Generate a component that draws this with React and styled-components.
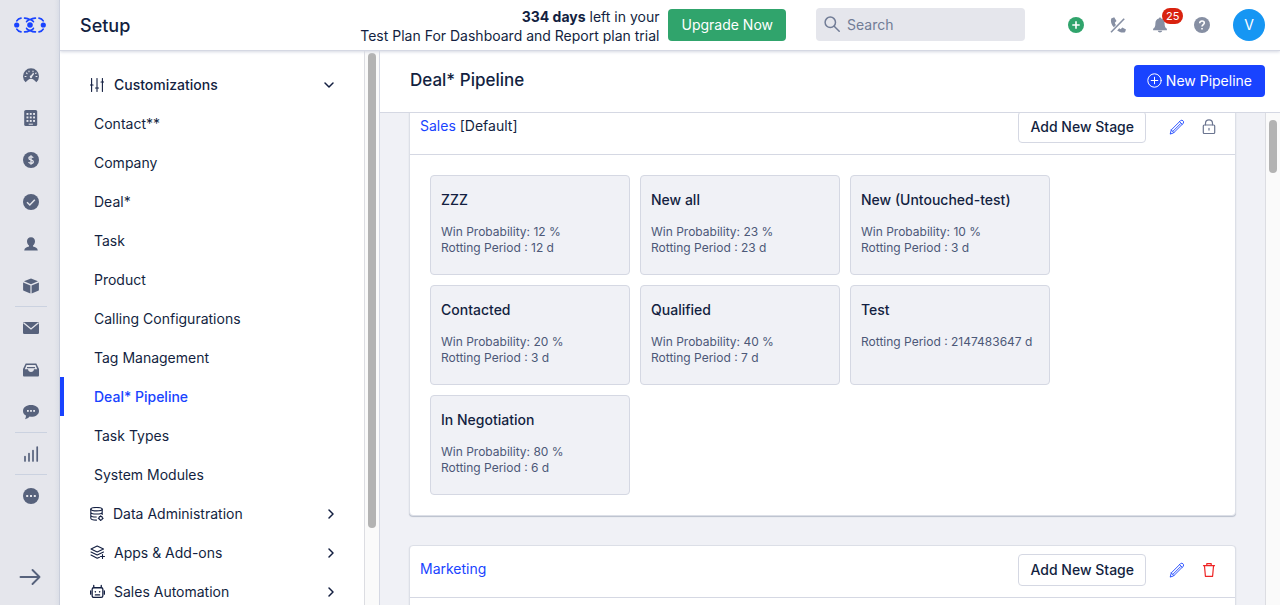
import React, { useLayoutEffect, useRef } from 'react';
import styled, { createGlobalStyle, css } from 'styled-components';

const GlobalStyle = createGlobalStyle`
  * { box-sizing: border-box; }
  body {
    margin: 0;
    font-family: Inter, "Liberation Sans", sans-serif;
    font-size: 14px;
    line-height: 20px;
    color: #131f41;
    background: #fff;
  }
  button, input { font: inherit; color: inherit; }
  a { color: inherit; text-decoration: none; }
  h1, h2, h3, p, ul { margin: 0; padding: 0; }
  ul { list-style: none; }
  svg { display: block; flex: none; }
`;

const Shell = styled.div`
  display: flex;
  height: 100vh;
  overflow: hidden;
`;

const Rail = styled.nav`
  display: flex;
  flex-direction: column;
  align-items: center;
  flex: none;
  width: 60px;
  padding: 12px 0;
  background: linear-gradient(to right, #e5e6ec 54px, #dcdfe7);
  border-right: 1px solid #c9cedb;
  color: #57627c;
`;

const Brand = styled.a`
  display: flex;
  align-items: center;
  height: 26px;
  margin-bottom: 17px;
`;

const RailLink = styled.a`
  display: flex;
  align-items: center;
  justify-content: center;
  flex: none;
  width: 32px;
  height: 42px;
  margin-left: 2px;
  border-bottom: 1px solid ${(p) => (p.$divided ? '#cbd2e0' : 'transparent')};
`;

const RailToggle = styled.button`
  display: flex;
  align-items: center;
  justify-content: center;
  width: 32px;
  height: 32px;
  margin-top: auto;
  padding: 0;
  border: 0;
  background: none;
`;

const Workspace = styled.div`
  display: flex;
  flex: 1;
  flex-direction: column;
  min-width: 0;
`;

const TopBar = styled.header`
  display: flex;
  align-items: center;
  flex: none;
  height: 51px;
  padding: 0 15px 0 20px;
  border-bottom: 1px solid #d5d8e3;
  box-shadow: 0 1px 3px #d5d8e3;
  z-index: 1;
`;

const AppTitle = styled.h1`
  flex: 1;
  padding-top: 2px;
  font-size: 18px;
  font-weight: 500;
  line-height: 24px;
`;

const TrialNote = styled.p`
  margin-right: 9px;
  padding-top: 1px;
  line-height: 19px;
  text-align: right;
`;

const SolidButton = styled.button`
  display: flex;
  align-items: center;
  gap: 4px;
  height: 32px;
  padding: 0 13px;
  border: 0;
  border-radius: 4px;
  background: ${(p) => (p.$tone === 'green' ? '#30a46c' : '#1943ff')};
  color: #fff;
  white-space: nowrap;
`;

const SearchBox = styled.label`
  display: flex;
  align-items: center;
  gap: 7px;
  width: 209px;
  height: 33px;
  margin: 0 35px 2px 30px;
  padding: 0 8px;
  border-radius: 4px;
  background: #e5e6ec;
  color: #717c96;
  input {
    flex: 1;
    min-width: 0;
    height: 24px;
    padding: 0;
    border: 0;
    outline: 0;
    background: none;
  }
  input::placeholder { color: #717c96; opacity: 1; }
`;

const TopActions = styled.div`
  display: flex;
  align-items: center;
  gap: 10px;
  color: #868fa3;
`;

const TopAction = styled.button`
  position: relative;
  display: flex;
  align-items: center;
  justify-content: center;
  width: 32px;
  height: 32px;
  padding: 0;
  border: 0;
  background: none;
`;

const Badge = styled.span`
  position: absolute;
  left: 18px;
  top: -1px;
  padding: 0 4px;
  border-radius: 8px;
  background: #d9220f;
  color: #fff;
  font-size: 11px;
  line-height: 16px;
`;

const Avatar = styled.button`
  width: 32px;
  height: 32px;
  margin-left: 5px;
  padding: 0;
  border: 0;
  border-radius: 50%;
  background: #1696f3;
  color: #fff;
`;

const Columns = styled.div`
  display: flex;
  flex: 1;
  min-height: 0;
`;

const SideMenu = styled.nav`
  display: flex;
  flex: none;
  width: 320px;
  border-right: 1px solid #d5d8e3;
`;

const MenuList = styled.ul`
  flex: 1;
  padding-top: 14px;
  overflow: hidden;
`;

const rowStyle = css`
  display: flex;
  align-items: center;
  width: 100%;
  height: 39px;
`;

const GroupButton = styled.button`
  ${rowStyle}
  gap: ${(p) => (p.$open ? 10 : 9)}px;
  padding: 0 28px 0 30px;
  border: 0;
  background: none;
  text-align: left;
  font-weight: ${(p) => (p.$open ? 500 : 400)};
  span { flex: 1; }
`;

const MenuLink = styled.a`
  ${rowStyle}
  padding-left: 30px;
  border-left: 4px solid ${(p) => (p.$active ? '#1943ff' : 'transparent')};
  color: ${(p) => (p.$active ? '#1943ff' : 'inherit')};
  font-weight: ${(p) => (p.$active ? 500 : 400)};
`;

const Track = styled.div`
  flex: none;
  width: 15px;
  padding: ${(p) => p.$inset}px 3px 0;
  border-left: 1px solid #dcdde2;
  background: #fafafa;
`;

const Thumb = styled.div`
  width: 8px;
  height: ${(p) => p.$share}%;
  border-radius: 4px;
  background: #b3b3b3;
`;

const Main = styled.main`
  display: flex;
  flex: 1;
  flex-direction: column;
  min-width: 0;
  background: #f0f1f6;
`;

const PageHead = styled.div`
  display: flex;
  align-items: center;
  justify-content: space-between;
  flex: none;
  height: 62px;
  padding: 0 15px 2px 30px;
  border-bottom: 1px solid #d5d8e3;
  background: #fff;
  h2 {
    padding-bottom: 2px;
    font-size: 17px;
    font-weight: 500;
    line-height: 24px;
  }
`;

const ScrollArea = styled.div`
  display: flex;
  flex: 1;
  min-height: 0;
`;

const PipelineList = styled.div`
  flex: 1;
  min-width: 0;
  padding: 20px 29px;
  overflow: hidden;
`;

const Pipeline = styled.section`
  margin-bottom: 29px;
  border: 1px solid #dcdfe7;
  border-radius: 4px;
  background: #fff;
  box-shadow: 0 1px 1px #b9bfcc;
`;

const PipelineHead = styled.div`
  display: flex;
  align-items: center;
  height: 52px;
  padding: 0 10px;
  border-bottom: 1px solid #d5d8e3;
  p {
    flex: 1;
    padding-bottom: 5px;
  }
  a { color: #1943ff; }
`;

const OutlineButton = styled.button`
  height: 32px;
  margin-right: 15px;
  margin-bottom: 3px;
  padding: 0 11px;
  border: 1px solid #d5d8e3;
  border-radius: 4px;
  background: #fff;
  font-weight: 500;
`;

const IconButton = styled.button`
  display: flex;
  align-items: center;
  justify-content: center;
  width: 32px;
  height: 32px;
  padding: 0 0 3px;
  border: 0;
  background: none;
  color: ${(p) => p.$color};
`;

const StageGrid = styled.ul`
  display: flex;
  flex-wrap: wrap;
  gap: 10px;
  padding: 20px;
`;

const Stage = styled.li`
  width: 200px;
  height: 100px;
  padding: 14px 10px;
  border: 1px solid #d5d8e3;
  border-radius: 4px;
  background: #f0f1f6;
  h3 {
    margin-bottom: 14px;
    font-size: 14px;
    font-weight: 500;
    line-height: 20px;
  }
  p {
    color: #4c5878;
    font-size: 12px;
    line-height: 16px;
    white-space: nowrap;
  }
`;

const Line = ({ size = 16, w = 1.2, box = 16, children }) => (
  <svg width={size} height={size} viewBox={`0 0 ${box} ${box}`} fill="none" stroke="currentColor"
    strokeWidth={w} strokeLinecap="round" strokeLinejoin="round" aria-hidden="true">{children}</svg>
);
const Solid = ({ size = 16, children }) => (
  <svg width={size} height={size} viewBox="0 0 16 16" fill="currentColor" aria-hidden="true">{children}</svg>
);

const BG = '#e5e6ec';

const Logo = () => (
  <svg width="32" height="16" viewBox="0 0 32 16" fill="none" stroke="#1943ff" strokeWidth="1.700" strokeLinecap="round" aria-hidden="true">
    <path d="M2.800 3.800Q4.200 1.300 7 1.100M2.800 12.200Q4.200 14.700 7 14.900M29.200 3.800Q27.800 1.300 25 1.100M29.200 12.200Q27.800 14.700 25 14.900" />
    <path d="M10.600 1.100Q13.400 1 16 2.800Q18.600 1 21.400 1.100M10.600 14.900Q13.400 15 16 13.200Q18.600 15 21.400 14.900" />
    <path d="M12.600 4.700Q13.200 3.600 14.500 2.900M12.600 11.300Q13.200 12.400 14.500 13.100M19.400 4.700Q18.800 3.600 17.500 2.900M19.400 11.300Q18.800 12.400 17.500 13.100" />
    <g fill="#1943ff" stroke="none"><circle cx="2.700" cy="8" r="2.600" /><circle cx="16" cy="8" r="2.800" /><circle cx="29.300" cy="8" r="2.600" /></g>
  </svg>
);

const railIcons = [
  ['Dashboard', <Solid key="i"><path d="M2.600 14.200A8 8 0 1 1 13.400 14.200L11 12.100a4.500 4.500 0 0 0-6 0z" /><g stroke={BG} strokeWidth="1.100" strokeLinecap="round"><path d="M2 8.500h1M3.500 5l.6.6M6 3v.8M10 3v.8M13.200 5l-.6.5M14 8.500h-1" /><path d="M7.800 9l2.500-3.200" strokeWidth="1.500" /></g><circle cx="8" cy="8.800" r="1.200" fill={BG} /></Solid>],
  ['Companies', <Solid key="i"><rect x="1.200" y="0" width="13" height="16" rx="1.600" /><g fill={BG}>{[3, 6.500, 10].map((y) => [3.500, 6.800, 10.100].map((x) => <rect key={`${x}-${y}`} x={x} y={y} width="1.900" height="1.900" />))}<rect x="5.700" y="13.700" width="4.200" height="1" /></g></Solid>],
  ['Deals', <Solid key="i"><circle cx="8" cy="8" r="8" /><path d="M10.200 5.800C9.800 4.900 9 4.600 8 4.600c-1.200 0-2.100.6-2.100 1.600 0 2.300 4.400 1.100 4.400 3.500 0 1.100-1 1.700-2.300 1.700-1.200 0-2-.5-2.400-1.400M8 3.200v9.600" fill="none" stroke={BG} strokeWidth="1.300" /></Solid>],
  ['Tasks', <Solid key="i"><circle cx="8" cy="8" r="8" /><path d="M4 8.300l2.800 2.700 5-5.300" fill="none" stroke={BG} strokeWidth="1.500" /></Solid>],
  ['Contacts', <Solid key="i"><path d="M8 1.200c-2.700 0-4 1.700-4 4 0 2 .8 3.300 2 4.200v1.200c-2.300.6-4.500 1.400-4.800 4h13.600c-.3-2.600-2.500-3.400-4.800-4V9.400c1.200-.9 2-2.200 2-4.200 0-2.300-1.300-4-4-4z" /></Solid>],
  ['Products', <Solid key="i"><path d="M8 .5l7 2.800L8 6.200.9 3.300z" /><path d="M.1 4.400l7.300 3v8.200L.8 12.700a1 1 0 0 1-.7-1zM15.900 4.400l-7.300 3v8.200l6.600-2.900a1 1 0 0 0 .7-1z" /></Solid>, true],
  ['Mail', <Solid key="i"><rect x="0" y="2" width="16" height="12" rx="1.200" /><path d="M.5 2.800L8 9l7.500-6.200" fill="none" stroke={BG} strokeWidth="1.300" /></Solid>],
  ['Inbox', <Solid key="i"><path fillRule="evenodd" d="M2.700 1.500h10.600L16 7v6.300c0 .8-.5 1.200-1.200 1.200H1.200C.5 14.500 0 14.100 0 13.300V7zM3.500 3L1.800 7.200H5c.3 1.800 1.300 2.700 3 2.700s2.700-.9 3-2.700h3.200L12.500 3z" /><path d="M4 5h8v1.200H4z" /></Solid>],
  ['Conversations', <Solid key="i"><path d="M8 1C3.300 1 0 3.400 0 6.900c0 2 1.100 3.600 2.900 4.600.2 1.500-.3 2.700-1 3.700 2-.3 3.600-1.200 4.700-2.600l1.400.1c4.700 0 8-2.300 8-5.800S12.700 1 8 1z" /><g fill={BG}><rect x="4" y="6" width="1.800" height="1.800" /><rect x="7.100" y="6" width="1.800" height="1.800" /><rect x="10.200" y="6" width="1.800" height="1.800" /></g></Solid>, true],
  ['Reports', <Line key="i" w="1.700"><path d="M2 10.500V15M6 7.500V15M10 4.500V15M14.200 1v14" /></Line>, true],
  ['More', <Solid key="i"><circle cx="8" cy="8" r="8" /><g fill={BG}><rect x="3.200" y="7" width="2" height="2" /><rect x="7" y="7" width="2" height="2" /><rect x="10.800" y="7" width="2" height="2" /></g></Solid>],
];

const SlidersIcon = () => <Line size={14} w="1.100" box={14}><path d="M1.600.5v13M7 .5v13M12.400.5v13M.3 7h2.800M5.500 10h3M11 4h2.700" /></Line>;
const DatabaseIcon = () => <Line size={14} box={14} w="1.100"><ellipse cx="6.500" cy="2.200" rx="5.700" ry="1.700" /><path d="M.8 2.200v9c0 1 2.300 1.900 5.700 1.900M12.200 2.200v5.300M.8 5.200c0 1 2.300 1.800 5.700 1.800s5.700-.8 5.700-1.800M.8 8.200c0 1 2.300 1.800 5.500 1.800" /><circle cx="10.700" cy="11.200" r="1.800" /><path d="M10.700 8.700v.7M10.700 13v.7M8.300 11.200H9M12.400 11.200h.8" /></Line>;
const LayersIcon = () => <Line size={15} box={15} w="1.100"><path d="M7.200 1l6.300 3-6.300 3L1 4zM1 7l6.200 3 6.300-3M1 10l6.200 3.300 2.300-1.100M12.500 9.500v4M10.500 11.500h4" /></Line>;
const RobotIcon = () => <Line size={15} box={14} w="1.200"><rect x="2" y="3.500" width="10" height="9" rx="1.500" /><path d="M3.500 3V1.300M10.500 3V1.300M.6 6.500v3M13.400 6.500v3M5 10.200h4" /><path d="M5 7.200v.1M9 7.200v.1" strokeWidth="1.500" /></Line>;
const ChevronRight = () => <Line size={14} box={14} w="1.500"><path d="M7 3l4 4-4 4" /></Line>;
const ChevronDown = () => <Line size={14} box={14} w="1.500"><path d="M3 5l4 4 4-4" /></Line>;
const SearchIcon = () => <Line w="1.500"><circle cx="6.300" cy="6.300" r="5.200" /><path d="M10.200 10.200L15.200 15.200" /></Line>;
const PlusIcon = () => <Solid><circle cx="8" cy="8" r="8" fill="#30a46c" /><path d="M8 4.300v7.400M4.300 8h7.400" stroke="#fff" strokeWidth="1.600" /></Solid>;
const PhoneIcon = () => <Solid><path d="M1.200 1.600L4.200.3l2.300 3.800-1.700 1.700c.2.800.6 1.500 1.200 2.200L3.800 10.300C1.300 7.700.4 4.500 1.200 1.600zM7.200 13.500l2-2.200 1.500 1 1.600-1.700 3.700 1.900-1 2.700c-2.700.8-5.400.1-7.800-1.700z" /><path d="M1 15.300L14.200 1.800" stroke="currentColor" strokeWidth="1.600" /></Solid>;
const BellIcon = () => <Solid><path d="M8 .4c.7 0 1.100.5 1.100 1.200 2.200.5 3.500 2.300 3.500 4.700 0 3.200.6 4.500 2.300 5.400v1.500H1.100v-1.500c1.700-.9 2.300-2.200 2.300-5.400 0-2.400 1.300-4.200 3.500-4.700C6.900.9 7.300.4 8 .4zM5.800 13.800h4.400c-.2 1-1.100 1.600-2.200 1.600s-2-.6-2.200-1.600z" /></Solid>;
const HelpIcon = () => <Solid><circle cx="8" cy="8" r="8" /><path d="M5.700 6.200c0-1.400 1-2.200 2.300-2.200s2.300.8 2.300 2c0 1.500-2.300 1.700-2.300 3.500M8 10.900v1.600" fill="none" stroke="#fff" strokeWidth="1.600" /></Solid>;
const CirclePlusIcon = () => <Line size={15} box={15} w="1"><circle cx="7.500" cy="7.500" r="6.700" /><path d="M7.500 4.200v6.600M4.200 7.500h6.600" /></Line>;
const PencilIcon = () => <Line w="0.900"><path d="M1.300 14.700l1-3.800L11.700 1.500c1.500-1.100 3.600.9 2.700 2.600L4.900 13.600zM2.300 10.900l2.600 2.700M10.600 2.700l2.600 2.600M4 12.200l7.500-7.500" /></Line>;
const LockIcon = () => <Line><rect x="2.300" y="6" width="11.400" height="8.500" rx="1" /><path d="M4.500 5.800V4.300a3.500 3.500 0 0 1 7 0v1.500M8 9.300v1.800" /></Line>;
const TrashIcon = () => <Line w="1.200"><path d="M2.500 3.700h11M5.800 3.500V1.700h4.400v1.800M3.500 4l.9 10.300h7.200L12.500 4" /></Line>;
const ArrowIcon = () => <Line size={22} box={22} w="1.900"><path d="M1.500 11h19M13.500 4l7 7-7 7" /></Line>;

const customizations = ['Contact**', 'Company', 'Deal*', 'Task', 'Product', 'Calling Configurations',
  'Tag Management', 'Deal* Pipeline', 'Task Types', 'System Modules'];

const closedGroups = [
  ['Data Administration', DatabaseIcon],
  ['Apps & Add-ons', LayersIcon],
  ['Sales Automation', RobotIcon],
];

const salesStages = [
  { name: 'ZZZ', win: 12, rot: 12 },
  { name: 'New all', win: 23, rot: 23 },
  { name: 'New (Untouched-test)', win: 10, rot: 3 },
  { name: 'Contacted', win: 20, rot: 3 },
  { name: 'Qualified', win: 40, rot: 7 },
  { name: 'Test', rot: 2147483647 },
  { name: 'In Negotiation', win: 80, rot: 6 },
];

function PipelineCard({ name, isDefault, stages }) {
  return (
    <Pipeline>
      <PipelineHead>
        <p><a href="#pipeline">{name}</a>{isDefault && ' [Default]'}</p>
        <OutlineButton type="button">Add New Stage</OutlineButton>
        <IconButton type="button" $color="#1943ff" aria-label="Edit pipeline"><PencilIcon /></IconButton>
        {isDefault
          ? <IconButton type="button" $color="#6b7590" aria-label="Locked pipeline"><LockIcon /></IconButton>
          : <IconButton type="button" $color="#ee2424" aria-label="Delete pipeline"><TrashIcon /></IconButton>}
      </PipelineHead>
      <StageGrid>
        {stages.map((s) => (
          <Stage key={s.name}>
            <h3>{s.name}</h3>
            {s.win !== undefined && <p>Win Probability: {s.win} %</p>}
            <p>Rotting Period : {s.rot} d</p>
          </Stage>
        ))}
      </StageGrid>
    </Pipeline>
  );
}

export default function App() {
  const list = useRef(null);
  // The list opens scrolled just past the top edge of the first pipeline.
  useLayoutEffect(() => { list.current.scrollTop = 31; }, []);

  return (
    <>
      <GlobalStyle />
      <Shell>
        <Rail aria-label="Modules">
          <Brand href="#home" aria-label="Home"><Logo /></Brand>
          {railIcons.map(([label, icon, divided]) => (
            <RailLink key={label} href="#module" aria-label={label} $divided={divided}>{icon}</RailLink>
          ))}
          <RailToggle type="button" aria-label="Expand menu"><ArrowIcon /></RailToggle>
        </Rail>
        <Workspace>
          <TopBar>
            <AppTitle>Setup</AppTitle>
            <TrialNote><strong>334 days</strong> left in your<br />Test Plan For Dashboard and Report plan trial</TrialNote>
            <SolidButton type="button" $tone="green">Upgrade Now</SolidButton>
            <SearchBox>
              <SearchIcon />
              <input type="search" placeholder="Search" aria-label="Search" />
            </SearchBox>
            <TopActions>
              <TopAction type="button" aria-label="Add"><PlusIcon /></TopAction>
              <TopAction type="button" aria-label="Calls off"><PhoneIcon /></TopAction>
              <TopAction type="button" aria-label="Notifications"><BellIcon /><Badge>25</Badge></TopAction>
              <TopAction type="button" aria-label="Help"><HelpIcon /></TopAction>
              <Avatar type="button">V</Avatar>
            </TopActions>
          </TopBar>
          <Columns>
            <SideMenu aria-label="Setup">
              <MenuList>
                <li><GroupButton type="button" $open aria-expanded="true"><SlidersIcon /><span>Customizations</span><ChevronDown /></GroupButton></li>
                {customizations.map((item) => (
                  <li key={item}><MenuLink href="#setup" $active={item === 'Deal* Pipeline'}>{item}</MenuLink></li>
                ))}
                {closedGroups.map(([label, Icon]) => (
                  <li key={label}><GroupButton type="button" aria-expanded="false"><Icon /><span>{label}</span><ChevronRight /></GroupButton></li>
                ))}
              </MenuList>
              <Track $inset={2}><Thumb $share={86} /></Track>
            </SideMenu>
            <Main>
              <PageHead>
                <h2>Deal* Pipeline</h2>
                <SolidButton type="button"><CirclePlusIcon />New Pipeline</SolidButton>
              </PageHead>
              <ScrollArea>
                <PipelineList ref={list}>
                  <PipelineCard name="Sales" isDefault stages={salesStages} />
                  <PipelineCard name="Marketing" stages={[]} />
                </PipelineList>
                <Track $inset={7}><Thumb $share={11} /></Track>
              </ScrollArea>
            </Main>
          </Columns>
        </Workspace>
      </Shell>
    </>
  );
}
